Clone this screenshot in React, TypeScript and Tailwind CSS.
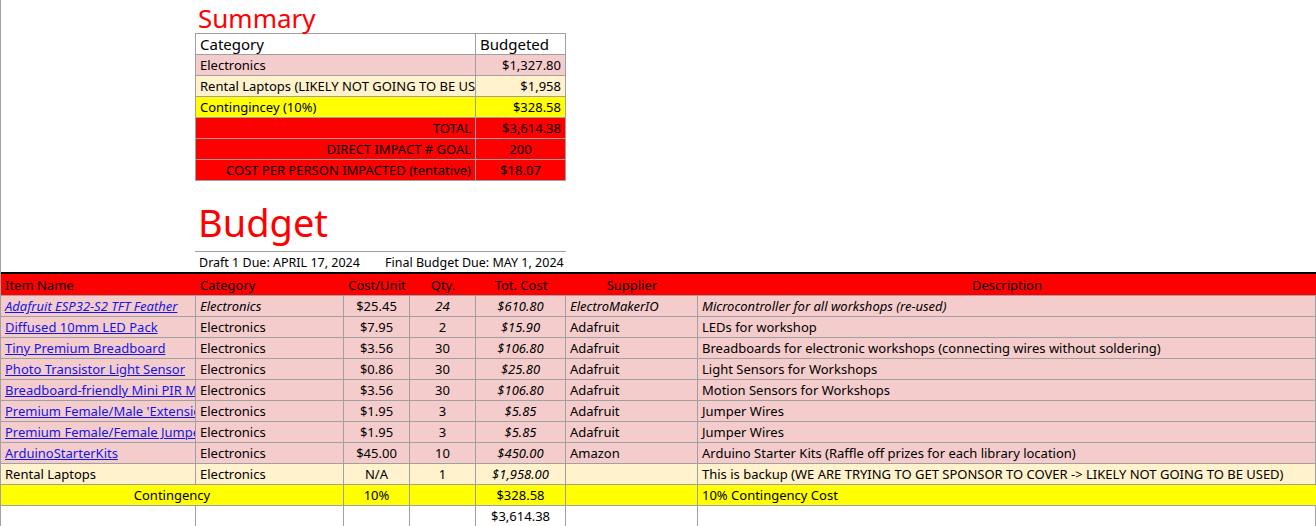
import React from "react";

const cols = ["w-[195px]", "w-[148px]", "w-[66px]", "w-[66px]", "w-[90px]", "w-[132px]", "flex-1"];
const PINK = "bg-[#f4cccc]";
const CREAM = "bg-[#fff2cc]";

type Cell = { t: string; a?: "l" | "c" | "r"; link?: boolean; i?: boolean };

function Row({ cells, bg, h = "h-[21px]" }: { cells: Cell[]; bg: string; h?: string }) {
  return (
    <div className={`flex ${h} ${bg} border-b border-[#a0a0a0]`}>
      {cells.map((c, k) => (
        <div
          key={k}
          className={`${cols[k]} shrink-0 overflow-hidden whitespace-nowrap pl-[4px] flex items-center border-r border-[#a0a0a0] ${
            c.a === "c" ? "justify-center pr-[4px]" : c.a === "r" ? "justify-end pr-[4px]" : ""
          } ${c.i ? "italic" : ""}`}
        >
          <span className={`pt-[2px] ${c.link ? "text-[#1515e6] underline" : ""}`}>{c.t}</span>
        </div>
      ))}
    </div>
  );
}

const items: [string, string, string, string, string, string, string, boolean][] = [
  ["Adafruit ESP32-S2 TFT Feather", "Electronics", "$25.45", "24", "$610.80", "ElectroMakerIO", "Microcontroller for all workshops (re-used)", true],
  ["Diffused 10mm LED Pack", "Electronics", "$7.95", "2", "$15.90", "Adafruit", "LEDs for workshop", false],
  ["Tiny Premium Breadboard", "Electronics", "$3.56", "30", "$106.80", "Adafruit", "Breadboards for electronic workshops (connecting wires without soldering)", false],
  ["Photo Transistor Light Sensor", "Electronics", "$0.86", "30", "$25.80", "Adafruit", "Light Sensors for Workshops", false],
  ["Breadboard-friendly Mini PIR Motion Sensor", "Electronics", "$3.56", "30", "$106.80", "Adafruit", "Motion Sensors for Workshops", false],
  ["Premium Female/Male 'Extension' Jumper Wires", "Electronics", "$1.95", "3", "$5.85", "Adafruit", "Jumper Wires", false],
  ["Premium Female/Female Jumper Wires", "Electronics", "$1.95", "3", "$5.85", "Adafruit", "Jumper Wires", false],
  ["ArduinoStarterKits", "Electronics", "$45.00", "10", "$450.00", "Amazon", "Arduino Starter Kits (Raffle off prizes for each library location)", false],
];

function SRow({ l, r, bg, la = "l", ra = "r" }: { l: string; r: string; bg: string; la?: string; ra?: string }) {
  return (
    <div className={`flex h-[21px] ${bg} border-b border-[#a0a0a0]`}>
      <div className={`w-[280px] shrink-0 pl-[4px] flex items-center overflow-hidden whitespace-nowrap border-r border-[#a0a0a0] pt-[2px] ${la === "r" ? "justify-end pr-[4px]" : ""}`}>{l}</div>
      <div className={`flex-1 px-[4px] pt-[2px] flex items-center ${ra === "c" ? "justify-center" : "justify-end"}`}>{r}</div>
    </div>
  );
}

export default function App() {
  return (
    <div className="w-[1316px] h-[526px] overflow-hidden bg-white text-[13px] text-black border-l border-[#a0a0a0]" style={{ fontFamily: "'Noto Sans', 'Open Sans', sans-serif" }}>
      <div className="ml-[194px] w-[371px]">
        <div className="h-[33px] text-[26px] leading-[36px] text-[#ff0000] pl-[3px]">Summary</div>
        <div className="border border-[#a0a0a0] border-b-0">
          <div className="flex h-[21px] border-b border-[#a0a0a0] text-[15px]">
            <div className="w-[280px] shrink-0 px-[4px] flex items-center border-r border-[#a0a0a0]">Category</div>
            <div className="flex-1 px-[4px] flex items-center">Budgeted</div>
          </div>
          <SRow l="Electronics" r="$1,327.80" bg={PINK} />
          <SRow l="Rental Laptops (LIKELY NOT GOING TO BE USED)" r="$1,958" bg={CREAM} />
          <SRow l="Contingincey (10%)" r="$328.58" bg="bg-[#ffff00]" />
          <SRow l="TOTAL" r="$3,614.38" bg="bg-[#ff0000]" la="r" />
          <SRow l="DIRECT IMPACT # GOAL" r="200" bg="bg-[#ff0000]" la="r" ra="c" />
          <SRow l="COST PER PERSON IMPACTED (tentative)" r="$18.07" bg="bg-[#ff0000]" la="r" ra="c" />
        </div>
        <div className="h-[71px] border-b border-[#a0a0a0] flex items-center text-[38px] text-[#ff0000] pl-[3px] pt-[12px]">Budget</div>
        <div className="flex h-[20px] items-center text-[12.5px] pl-[4px] pt-[2px]">
          <span className="w-[186px]">Draft 1 Due: APRIL 17, 2024</span>
          <span>Final Budget Due: MAY 1, 2024</span>
        </div>
      </div>
      <div className="border-t-[2px] border-black">
        <div className="flex h-[22px] bg-[#ff0000] border-b border-[#a0a0a0]">
          {["Item Name", "Category", "Cost/Unit", "Qty.", "Tot. Cost", "Supplier", "Description"].map((t, k) => (
            <div key={k} className={`${cols[k]} shrink-0 px-[4px] flex items-end ${k >= 2 ? "justify-center" : ""}`}>{t}</div>
          ))}
        </div>
        {items.map((it, k) => (
          <Row
            key={k}
            bg={PINK}
            cells={[
              { t: it[0], link: true, i: it[7] },
              { t: it[1], i: it[7] },
              { t: it[2], a: "c" },
              { t: it[3], a: "c", i: it[7] },
              { t: it[4], a: "c", i: true },
              { t: it[5], i: it[7] },
              { t: it[6], i: it[7] },
            ]}
          />
        ))}
        <Row bg={CREAM} cells={[{ t: "Rental Laptops" }, { t: "Electronics" }, { t: "N/A", a: "c" }, { t: "1", a: "c" }, { t: "$1,958.00", a: "c", i: true }, { t: "" }, { t: "This is backup (WE ARE TRYING TO GET SPONSOR TO COVER -> LIKELY NOT GOING TO BE USED)" }]} />
        <div className="flex h-[21px] bg-[#ffff00] border-b border-[#a0a0a0]">
          <div className="w-[343px] shrink-0 flex items-center justify-center pt-[2px] border-r border-[#a0a0a0]">Contingency</div>
          <div className="w-[66px] shrink-0 flex items-center justify-center pt-[2px] border-r border-[#a0a0a0]">10%</div>
          <div className="w-[66px] shrink-0 border-r border-[#a0a0a0]"></div>
          <div className="w-[90px] shrink-0 flex items-center justify-center pt-[2px] border-r border-[#a0a0a0]">$328.58</div>
          <div className="w-[132px] shrink-0 border-r border-[#a0a0a0]"></div>
          <div className="flex-1 px-[4px] pt-[2px] flex items-center">10% Contingency Cost</div>
        </div>
        <Row bg="bg-white" cells={[{ t: "" }, { t: "" }, { t: "" }, { t: "" }, { t: "$3,614.38", a: "c" }, { t: "" }, { t: "" }]} />
      </div>
    </div>
  );
}
